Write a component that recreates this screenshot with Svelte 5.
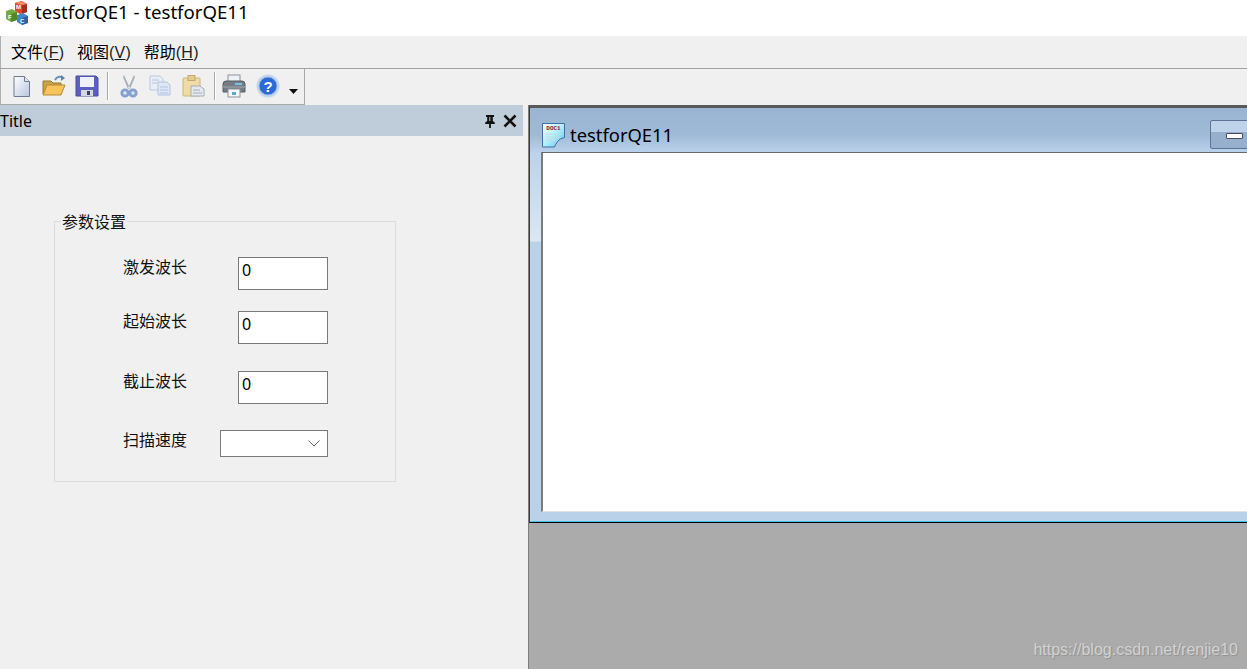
<script>
  const params = [
    { label: '激发波长', gap: 0 },
    { label: '起始波长', gap: 21 },
    { label: '截止波长', gap: 27 }
  ];
  const menus = [
    ['文件', 'F'],
    ['视图', 'V'],
    ['帮助', 'H']
  ];
</script>

<div class="app">
  <header class="titlebar">
    <svg class="app-icon" width="26" height="24" viewBox="0 0 26 24">
      <path d="M10 2l7-2 5 3v8l-7 2-5-3z" fill="#d9472f" />
      <path d="M17 4l5-1v8l-5 2z" fill="#a52d1c" />
      <path d="M10 2l7-2 5 3-5 1z" fill="#f08a68" />
      <path d="M1 10l6-2 5 3v8l-6 2-5-3z" fill="#6fae3e" />
      <path d="M6 13l6-2v8l-6 2z" fill="#4c8a2a" />
      <path d="M12 14l6-2 5 3v7l-6 2-5-3z" fill="#3f87c9" />
      <path d="M17 17l6-2v7l-6 2z" fill="#2a649f" />
      <text x="11" y="8" class="cube">M</text>
      <text x="3" y="18" class="cube">F</text>
      <text x="15" y="22" class="cube">C</text>
    </svg>
    <span>testforQE1 - testforQE11</span>
  </header>

  <nav class="menubar">
    {#each menus as [name, key]}
      <span class="menu">{name}<small>(<u>{key}</u>)</small></span>
    {/each}
  </nav>

  <div class="toolstrip">
    <div class="toolbar">
      <svg width="22" height="24" viewBox="0 0 22 24" class="tool new">
        <defs>
          <linearGradient id="page" x1="0" y1="0" x2="1" y2="1">
            <stop offset="0" stop-color="#ffffff" />
            <stop offset="1" stop-color="#b9c6de" />
          </linearGradient>
        </defs>
        <path d="M3 2.500h10.500l5 5v15H3z" fill="url(#page)" stroke="#6f7a90" />
        <path d="M13.500 2.500v5h5" fill="#dfe6f2" stroke="#6f7a90" />
      </svg>
      <svg width="26" height="24" viewBox="0 0 26 24" class="tool open">
        <path d="M2 7h8l2 2h8v11H2z" fill="#c9a24a" stroke="#9a7a2e" />
        <path d="M2 21l4-10h18l-4 10z" fill="#f7c45c" stroke="#b58a30" />
        <path d="M14 6c2-4 6-4 8-2" fill="none" stroke="#6d8fb5" stroke-width="2" />
        <path d="M20 1l4 3-4 3z" fill="#5f84ad" />
      </svg>
      <svg width="24" height="24" viewBox="0 0 24 24" class="tool save">
        <path d="M1 2h20l2 2v18H1z" fill="#5a5fc0" stroke="#4a4d96" />
        <rect x="5" y="3" width="14" height="10" fill="#eef0fa" />
        <rect x="6" y="16" width="12" height="6" fill="#d5d8e4" />
        <rect x="12" y="17" width="3" height="4" fill="#3c3f6e" />
      </svg>
      <i class="sep first"></i>
      <svg width="24" height="24" viewBox="0 0 24 24" class="tool cut">
        <path d="M7 1l5 11 1 2-2 1-5-12zM17 1l-5 11-1 2 2 1 5-12z" fill="#9aa6b4" />
        <circle cx="8" cy="19" r="3.200" fill="#dbe4f2" stroke="#6f93cc" stroke-width="2.800" />
        <circle cx="16" cy="19" r="3.200" fill="#dbe4f2" stroke="#6f93cc" stroke-width="2.800" />
      </svg>
      <svg width="24" height="24" viewBox="0 0 24 24" class="tool copy">
        <path d="M2 2h10l3 3v11H2z" fill="#e8edf6" stroke="#b4c3da" />
        <path d="M10 8h9l3 3v10H10z" fill="#dbe6f6" stroke="#a9bcd8" />
        <path d="M4 6h7M4 9h5M12 13h8M12 16h8M12 19h8" stroke="#a9bcd8" />
      </svg>
      <svg width="24" height="24" viewBox="0 0 24 24" class="tool paste">
        <rect x="2" y="4" width="17" height="18" rx="1" fill="#f0d79a" stroke="#c8ad6a" />
        <rect x="7" y="1.500" width="7" height="5" fill="#e3c57e" stroke="#b89c5c" />
        <path d="M10 12h9l4 3v7H10z" fill="#e4e8ee" stroke="#98a2ae" />
        <path d="M12 16h7M12 19h9" stroke="#98a2ae" />
      </svg>
      <i class="sep second"></i>
      <svg width="26" height="24" viewBox="0 0 26 24" class="tool print">
        <rect x="7" y="1" width="12" height="7" fill="#eef1f5" stroke="#8b929a" />
        <path d="M2 10q0-3 3-3h16q3 0 3 3v8H2z" fill="#747c86" stroke="#565d66" />
        <path d="M2 13h22" stroke="#a2a9b1" />
        <rect x="14" y="9" width="7" height="2" fill="#7cc0e8" />
        <rect x="7" y="15" width="12" height="8" fill="#f4f6f8" stroke="#8b929a" />
        <rect x="11" y="18" width="4" height="3" fill="#5da4d8" />
      </svg>
      <svg width="24" height="24" viewBox="0 0 24 24" class="tool">
        <circle cx="12" cy="12" r="11.500" fill="#c4d7ee" />
        <circle cx="12" cy="12" r="9" fill="#2c6bd6" stroke="#8fb2e2" />
        <text x="12" y="17.500" class="help">?</text>
      </svg>
      <svg class="caret" width="9" height="5" viewBox="0 0 9 5"><path d="M0 0h9L4.500 5z" fill="#111" /></svg>
    </div>
  </div>

  <main class="workspace">
    <aside class="pane">
      <div class="pane-title">
        <span>Title</span>
        <svg width="14" height="14" viewBox="0 0 14 14" class="pin">
          <path d="M3 1h8v2H9.800v4l2 1.500V10H7.900v4H6.100v-4H2.200V8.500l2-1.500V3H3z" fill="#111" />
          <path d="M6.300 3h1V7h-1z" fill="#bfcddb" />
        </svg>
        <svg width="14" height="14" viewBox="0 0 14 14" class="close">
          <path d="M1.500 1.500l11 11M12.500 1.500l-11 11" stroke="#111" stroke-width="2.600" />
        </svg>
      </div>

      <fieldset class="group">
        <legend>参数设置</legend>
        <div class="rows">
          {#each params as p}
            <div class="row" style:margin-top="{p.gap}px">
              <span class="label">{p.label}</span>
              <input class="field" type="text" value="0" />
            </div>
          {/each}
          <div class="row combo-row">
            <span class="label">扫描速度</span>
            <div class="combo">
              <svg width="12" height="7" viewBox="0 0 12 7"><path d="M.5.500L6 6 11.500.500" fill="none" stroke="#666" /></svg>
            </div>
          </div>
        </div>
      </fieldset>
    </aside>

    <section class="mdi">
      <div class="child">
        <div class="caption">
          <svg width="26" height="26" viewBox="0 0 26 26">
            <defs>
              <linearGradient id="doc" x1="0" y1="0" x2="1" y2="1">
                <stop offset="0" stop-color="#ffffff" />
                <stop offset="0.5" stop-color="#aef0fa" />
                <stop offset="1" stop-color="#6ab4ee" />
              </linearGradient>
            </defs>
            <path d="M1.500 1.500h22v14q-5 1-7 4t-3 5.500h-12z" fill="url(#doc)" stroke="#3e6fa8" />
            <text x="12.500" y="8" class="doc">DOC1</text>
            <path d="M4 12h16M4 15h14M4 18h10" stroke="#c8d6e4" />
          </svg>
          <span>testforQE11</span>
          <div class="min-btn"><i></i></div>
        </div>
        <div class="client"></div>
      </div>
      <span class="watermark">https://blog.csdn.net/renjie10</span>
    </section>
  </main>
</div>

<style>
  :global(body) {
    margin: 0;
  }

  .app {
    width: 1247px;
    height: 669px;
    display: flex;
    flex-direction: column;
    overflow: hidden;
    background: #f0f0f0;
    color: #000;
    font-family: "Noto Sans", "Noto Sans CJK SC", sans-serif;
  }

  .titlebar {
    height: 36px;
    box-sizing: border-box;
    padding: 2px 0 0 5px;
    flex: none;
    background: #fff;
    display: flex;
    align-items: flex-start;
    gap: 4px;
    font-size: 18.600px;
    line-height: 20px;
  }
  .app-icon {
    margin-top: -1px;
    flex: none;
  }
  .cube {
    font: bold 6px "Liberation Sans", sans-serif;
    fill: #fff;
  }

  .menubar {
    height: 32px;
    flex: none;
    display: flex;
    align-items: center;
    gap: 12.500px;
    padding-left: 11px;
    border-bottom: 1px solid #a0a0a0;
    box-shadow: inset 1px 0 #b0b0b0;
    font-size: 16px;
    line-height: 32px;
    font-family: "Noto Sans CJK SC", sans-serif;
  }
  .menu small {
    font-size: 16px;
    font-family: "Liberation Sans", sans-serif;
    letter-spacing: 0.300px;
    color: #222;
  }

  .toolstrip {
    height: 36px;
    flex: none;
    display: flex;
  }
  .toolbar {
    width: 305px;
    box-sizing: border-box;
    display: flex;
    align-items: center;
    padding-left: 11px;
    padding-bottom: 2px;
    border-right: 1px solid #a8a8a8;
    border-bottom: 1px solid #a8a8a8;
    box-shadow: inset 1px 0 #b0b0b0;
  }
  .tool {
    flex: none;
    margin-right: 9px;
  }
  .tool.new,
  .tool.open,
  .tool.save {
    margin-right: 8px;
  }
  .tool.cut,
  .tool.copy,
  .tool.paste {
    opacity: 0.85;
  }
  .tool.cut {
    margin-right: 7px;
  }
  .sep {
    width: 1px;
    height: 28px;
    flex: none;
    background: #a8a8a8;
    box-shadow: 1px 0 #fff;
  }
  .sep.first {
    margin-right: 9px;
  }
  .sep.second {
    margin-right: 6px;
  }
  .help {
    font: bold 15px "Liberation Sans", sans-serif;
    fill: #fff;
    text-anchor: middle;
  }
  .caret {
    margin: 12px 0 0 0;
    flex: none;
  }

  .workspace {
    flex: 1;
    min-height: 0;
    display: flex;
  }

  .pane {
    width: 523px;
    flex: none;
    display: flex;
    flex-direction: column;
  }
  .pane-title {
    height: 31px;
    flex: none;
    background: #bfcddb;
    display: flex;
    align-items: center;
    gap: 6px;
    padding-right: 6px;
    font-size: 16px;
  }
  .pane-title span {
    flex: 1;
  }

  .group {
    width: 342px;
    height: 271px;
    box-sizing: border-box;
    margin: 75px 0 0 54px;
    padding: 0;
    border: 1px solid #dcdcdc;
    min-inline-size: 0;
  }
  .group legend {
    padding: 0 1px;
    margin-left: 6px;
    font-size: 16px;
    line-height: 20px;
    font-family: "Noto Sans CJK SC", sans-serif;
    color: #111;
  }
  .rows {
    padding: 26px 0 0 68px;
  }

  .row {
    width: 205px;
    display: flex;
    justify-content: space-between;
    align-items: flex-start;
  }
  .combo-row {
    margin-top: 26px;
  }
  .label {
    margin-top: -1px;
    font-size: 16px;
    line-height: 20px;
    font-family: "Noto Sans CJK SC", sans-serif;
    color: #111;
  }
  .field {
    width: 90px;
    height: 33px;
    box-sizing: border-box;
    border: 1px solid #7a7a7a;
    border-radius: 0;
    outline: none;
    background: #fff;
    padding: 0 0 8px 3px;
    font: 16px "Noto Sans", sans-serif;
    color: #000;
  }
  .combo {
    width: 108px;
    height: 27px;
    box-sizing: border-box;
    border: 1px solid #7a7a7a;
    background: #fff;
    display: flex;
    align-items: center;
    justify-content: flex-end;
    padding-right: 7px;
  }

  .mdi {
    flex: 1;
    min-width: 0;
    margin-left: 5px;
    background: #ababab;
    border-left: 1px solid #7d7d7d;
    position: relative;
    overflow: hidden;
  }

  .child {
    width: 760px;
    height: 418px;
    box-sizing: border-box;
    border: 1px solid #6a6a6a;
    border-left-color: #3c3c3c;
    border-top: 3px solid #5a5a5a;
    border-bottom: 1px solid #000;
    display: flex;
    flex-direction: column;
    background: linear-gradient(180deg, #bad1ea 40px, #dbe7f3 133px, #bad1ea 134px);
    box-shadow: inset 0 -1px #3fc3e0;
  }
  .caption {
    height: 44px;
    flex: none;
    box-sizing: border-box;
    display: flex;
    align-items: center;
    gap: 3px;
    padding: 9px 0 0 11px;
    font-size: 18.400px;
    background: linear-gradient(180deg, #9ab5d2 0%, #9fbad6 60%, #bad1ea 100%);
  }
  .caption svg {
    flex: none;
  }
  .caption span {
    flex: 1;
  }
  .min-btn {
    width: 78px;
    height: 29px;
    flex: none;
    box-sizing: border-box;
    border: 1px solid #5f7596;
    border-radius: 2px;
    background: linear-gradient(180deg, #bed2e9 0 40%, #95afcd 40% 100%);
    position: relative;
  }
  .min-btn i {
    position: absolute;
    left: 15px;
    top: 12px;
    width: 17px;
    height: 6px;
    box-sizing: border-box;
    background: #fff;
    border: 1px solid #4a4a60;
    border-radius: 1px;
  }
  .client {
    height: 360px;
    flex: none;
    margin-left: 11px;
    background: #fff;
    border-left: 2px solid #7c7c7c;
    border-top: 1px solid #6a6a6a;
    border-bottom: 1px solid #e2e2e2;
    box-sizing: border-box;
  }

  .doc {
    font: bold 6px "Liberation Mono", monospace;
    fill: #a01030;
    text-anchor: middle;
  }

  .watermark {
    position: absolute;
    right: 9px;
    bottom: 10px;
    font: 16px "Liberation Sans", sans-serif;
    color: #d2d2d2;
    text-shadow: 1px 1px 1px #8f8f8f;
  }
</style>
